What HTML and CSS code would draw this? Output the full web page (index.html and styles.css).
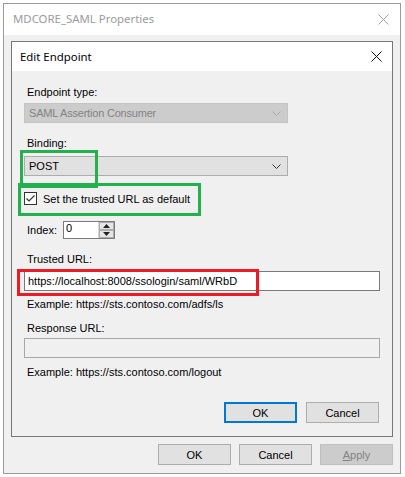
FILE: index.html
```html
<!DOCTYPE html>
<html lang="en">
<head>
    <meta charset="UTF-8">
    <meta name="viewport" content="width=device-width, initial-scale=1.0">
    <title>MDCORE_SAML Properties</title>
    <link rel="stylesheet" href="styles.css">
</head>
<body>
    <div class="window">
        <div class="titlebar">
            <span class="title">MDCORE_SAML Properties</span>
            <svg class="close close-muted" width="11" height="11" viewBox="0 0 11 11">
                <path d="M0.5 0.5 L10.5 10.5 M10.5 0.5 L0.5 10.5" stroke="#a0a0a0" stroke-width="1" fill="none"/>
            </svg>
        </div>

        <div class="window-body">
            <div class="dialog">
                <div class="dialog-titlebar">
                    <span class="dialog-title">Edit Endpoint</span>
                    <svg class="close" width="11" height="11" viewBox="0 0 11 11">
                        <path d="M0.5 0.5 L10.5 10.5 M10.5 0.5 L0.5 10.5" stroke="#111" stroke-width="1" fill="none"/>
                    </svg>
                </div>

                <div class="dialog-body">
                    <label class="field-label">Endpoint type:</label>
                    <div class="select select-disabled">
                        <span>SAML Assertion Consumer</span>
                        <svg width="9" height="5" viewBox="0 0 9 5"><path d="M0.5 0.5 L4.5 4.5 L8.5 0.5" stroke="#a8a8a8" fill="none"/></svg>
                    </div>

                    <label class="field-label gap-md">Binding:</label>
                    <div class="select select-binding">
                        <span>POST</span>
                        <svg width="9" height="5" viewBox="0 0 9 5"><path d="M0.5 0.5 L4.5 4.5 L8.5 0.5" stroke="#333" fill="none"/></svg>
                    </div>

                    <div class="check-row">
                        <span class="checkbox">
                            <svg width="11" height="11" viewBox="0 0 11 11"><path d="M1.5 5.5 L4 8 L9.5 2.5" stroke="#333" stroke-width="1.2" fill="none"/></svg>
                        </span>
                        <span>Set the trusted URL as default</span>
                    </div>

                    <div class="index-row">
                        <span class="index-label">Index:</span>
                        <div class="spinner">
                            <span class="spinner-value">0</span>
                            <div class="spin-buttons">
                                <span class="spin-btn"><svg width="7" height="4" viewBox="0 0 7 4"><path d="M0 4 L3.5 0 L7 4 Z" fill="#222"/></svg></span>
                                <span class="spin-btn"><svg width="7" height="4" viewBox="0 0 7 4"><path d="M0 0 L3.5 4 L7 0 Z" fill="#222"/></svg></span>
                            </div>
                        </div>
                    </div>

                    <label class="field-label gap-lg">Trusted URL:</label>
                    <div class="textbox textbox-trusted">https://localhost:8008/ssologin/saml/WRbD</div>
                    <div class="hint">Example: https://sts.contoso.com/adfs/ls</div>

                    <label class="field-label gap-response">Response URL:</label>
                    <div class="textbox textbox-disabled"></div>
                    <div class="hint hint-logout">Example: https://sts.contoso.com/logout</div>

                    <div class="button-row dialog-buttons">
                        <button class="btn btn-default">OK</button>
                        <button class="btn">Cancel</button>
                    </div>
                </div>
            </div>

            <div class="button-row window-buttons">
                <button class="btn">OK</button>
                <button class="btn">Cancel</button>
                <button class="btn btn-disabled"><u>A</u>pply</button>
            </div>
        </div>

        <!-- highlight boxes drawn on top of the form -->
        <div class="mark mark-green mark-binding"></div>
        <div class="mark mark-green mark-default"></div>
        <div class="mark mark-red mark-url"></div>
    </div>
</body>
</html>
```

FILE: styles.css
```css
body {
    margin: 0;
    background-color: #fff;
    font-family: "Liberation Sans", Arial, sans-serif;
    font-size: 11px;
    color: #000;
}
.window {
    position: relative;
    margin: 3px 0 0 3px;
    width: 396px;
    height: 469px;
    border: 1px solid #9a9a9a;
    background-color: #f0f0f0;
    display: flex;
    flex-direction: column;
}
.titlebar {
    height: 31px;
    background-color: #fff;
    display: flex;
    align-items: center;
    justify-content: space-between;
    padding: 0 11px 0 9px;
}
.title {
    font-family: "Noto Sans", sans-serif;
    font-size: 11.4px;
    color: #9b9b9b;
    margin-top: -2px;
}
.window-body {
    flex: 1;
    padding: 6px 7px 0 7px;
}
.dialog {
    border: 1px solid #777;
    background-color: #f0f0f0;
}
.dialog-titlebar {
    height: 29px;
    background-color: #fff;
    display: flex;
    align-items: center;
    justify-content: space-between;
    padding: 0 10px 0 8px;
}
.dialog-title {
    font-family: "Noto Sans", sans-serif;
    font-size: 11.4px;
    color: #000;
}
.dialog-body {
    padding: 14px 12px 13px 12px;
    display: flex;
    flex-direction: column;
}
.field-label {
    display: block;
    height: 14px;
    line-height: 14px;
    padding-left: 3px;
}
.gap-md {
    margin-top: 13px;
}
.gap-lg {
    margin-top: 13px;
}
.gap-response {
    margin-top: 10px;
}
.select {
    box-sizing: border-box;
    width: 264px;
    height: 20px;
    margin-top: 4px;
    display: flex;
    align-items: center;
    justify-content: space-between;
    padding: 0 6px 0 4px;
    border: 1px solid #adadad;
    background-color: #e1e1e1;
}
.select-disabled {
    background-color: #cccccc;
    border-color: #c4c4c4;
    color: #838383;
    letter-spacing: -0.2px;
}
.select-binding {
    margin-top: 6px;
}
.check-row {
    margin-top: 16px;
    height: 13px;
    display: flex;
    align-items: center;
    gap: 6px;
}
.checkbox {
    box-sizing: border-box;
    width: 13px;
    height: 13px;
    border: 1px solid #333;
    background-color: #fff;
    display: flex;
    align-items: center;
    justify-content: center;
}
.index-row {
    margin-top: 16px;
    display: flex;
    align-items: center;
}
.index-label {
    padding-left: 3px;
    width: 36px;
}
.spinner {
    box-sizing: border-box;
    width: 52px;
    height: 18px;
    border: 1px solid #7a7a7a;
    background-color: #fff;
    display: flex;
    justify-content: space-between;
}
.spinner-value {
    padding: 0 0 0 2px;
    line-height: 12px;
}
.spin-buttons {
    width: 15px;
    display: flex;
    flex-direction: column;
    border-left: 1px solid #d6d6d6;
}
.spin-btn {
    flex: 1;
    background-color: #e6e6e6;
    border: 1px solid #adadad;
    display: flex;
    align-items: center;
    justify-content: center;
}
.textbox {
    box-sizing: border-box;
    height: 20px;
    margin-top: 5px;
    border: 1px solid #7a7a7a;
    background-color: #fff;
    padding: 0 3px;
    line-height: 18px;
}
.textbox-disabled {
    margin-top: 3px;
    background-color: #f0f0f0;
    border-color: #a8a8a8;
}
.hint {
    margin-top: 6px;
    height: 14px;
    line-height: 14px;
    padding-left: 3px;
}
.hint-logout {
    margin-top: 7px;
}
.button-row {
    display: flex;
    justify-content: flex-end;
}
.dialog-buttons {
    margin-top: 23px;
    gap: 9px;
    padding-right: 1px;
}
.window-buttons {
    margin-top: 7px;
    gap: 8px;
}
.btn {
    box-sizing: border-box;
    width: 73px;
    height: 21px;
    padding: 0;
    border: 1px solid #adadad;
    background-color: #e1e1e1;
    font-family: "Liberation Sans", Arial, sans-serif;
    font-size: 11px;
    color: #000;
}
.btn-default {
    border: 2px solid #0078d7;
}
.btn-disabled {
    background-color: #cccccc;
    border-color: #bfbfbf;
    color: #838383;
}
.mark {
    position: absolute;
    box-sizing: border-box;
    border: 3px solid;
}
.mark-green {
    border-color: #22b14c;
}
.mark-red {
    border-color: #ed1c24;
}
.mark-binding {
    left: 16px;
    top: 146px;
    width: 78px;
    height: 38px;
}
.mark-default {
    left: 14px;
    top: 179px;
    width: 183px;
    height: 33px;
}
.mark-url {
    left: 13px;
    top: 265px;
    width: 242px;
    height: 27px;
}
```
